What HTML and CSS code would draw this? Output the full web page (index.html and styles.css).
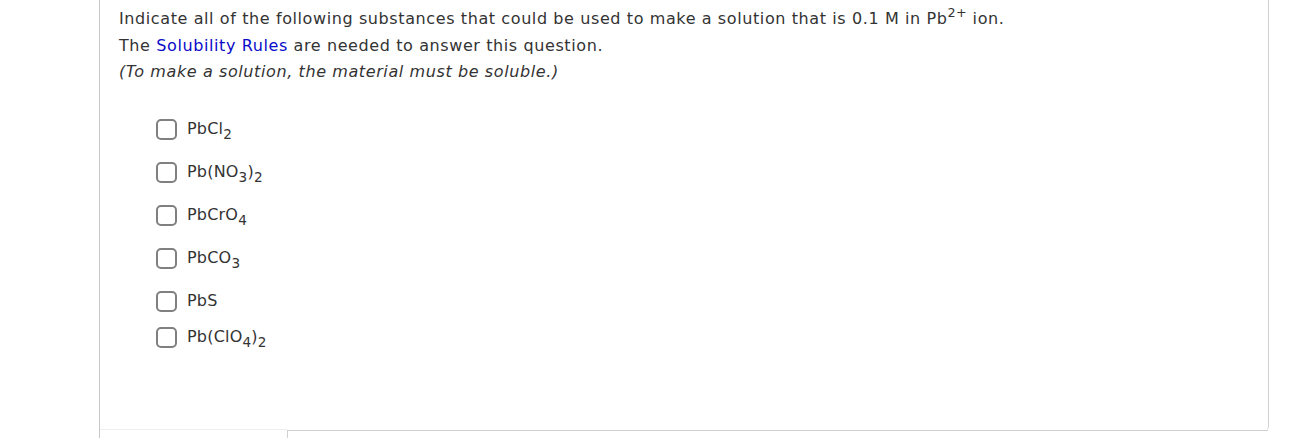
FILE: index.html
```html
<!DOCTYPE html>
<html>
<head>
<meta charset="utf-8">
<link rel="stylesheet" href="styles.css">
</head>
<body>
<div class="frame">
  <div class="card">
    <div class="content">
      <p class="q">Indicate all of the following substances that could be used to make a solution that is 0.1 M in Pb<sup>2+</sup> ion.</p>
      <p class="q">The <a class="link" href="#">Solubility Rules</a> are needed to answer this question.</p>
      <p class="q note">(To make a solution, the material must be soluble.)</p>
      <ul class="options">
        <li class="opt"><span class="box"></span><span class="label">PbCl<sub>2</sub></span></li>
        <li class="opt"><span class="box"></span><span class="label">Pb(NO<sub>3</sub>)<sub>2</sub></span></li>
        <li class="opt"><span class="box"></span><span class="label">PbCrO<sub>4</sub></span></li>
        <li class="opt"><span class="box"></span><span class="label">PbCO<sub>3</sub></span></li>
        <li class="opt"><span class="box"></span><span class="label">PbS</span></li>
        <li class="opt"><span class="box"></span><span class="label">Pb(ClO<sub>4</sub>)<sub>2</sub></span></li>
      </ul>
    </div>
    <div class="foot"><div class="foot-left"></div><div class="foot-right"></div></div>
  </div>
  <div class="below"><div class="below-left"></div><div class="below-right"></div></div>
</div>
</body>
</html>
```
FILE: styles.css
```css
html, body { margin: 0; padding: 0; background: #fff; }
body { font-family: "DejaVu Sans", Verdana, sans-serif; color: #333; }
.frame {
  margin-left: 99px;
  width: 1170px;
  height: 438px;
  border-left: 1px solid #c8c8c8;
  box-sizing: border-box;
  display: flex;
  flex-direction: column;
}
.card {
  height: 431px;
  box-sizing: border-box;
  border-right: 1px solid #d2d2d2;
  border-bottom-right-radius: 5px;
  display: flex;
  flex-direction: column;
}
.content { flex: 1; padding: 6px 0 0 19px; }
.q { margin: 0; font-size: 16px; letter-spacing: 0.6px; line-height: 26.5px; }
.q sup { font-size: 0.8em; line-height: 0; vertical-align: 0.55em; letter-spacing: 0.3px; }
.link { color: #0a0ac8; text-decoration: none; }
.note { font-style: italic; }
.options { list-style: none; margin: 33px 0 0 37px; padding: 0; }
.opt { display: flex; align-items: flex-start; font-size: 16px; letter-spacing: 0.2px; margin-bottom: 15px; }
.box {
  width: 21px; height: 21px; box-sizing: border-box;
  border: 2px solid #808080; border-radius: 5px;
  margin-right: 10px; flex: none; margin-top: 0;
}
.label { line-height: 20px; }
.label sub { font-size: 0.85em; vertical-align: -0.4em; line-height: 1.75; }
.foot { display: flex; height: 1px; }
.foot-left { width: 187px; border-top: 1px solid #eeeeee; margin-top: -1px; }
.foot-right { flex: 1; border-bottom: 1px solid #cfcfcf; border-bottom-right-radius: 5px; }
.below { display: flex; flex: 1; }
.below-left { width: 187px; }
.below-right { border-left: 1px solid #d0d0d0; flex: 1; }
```
